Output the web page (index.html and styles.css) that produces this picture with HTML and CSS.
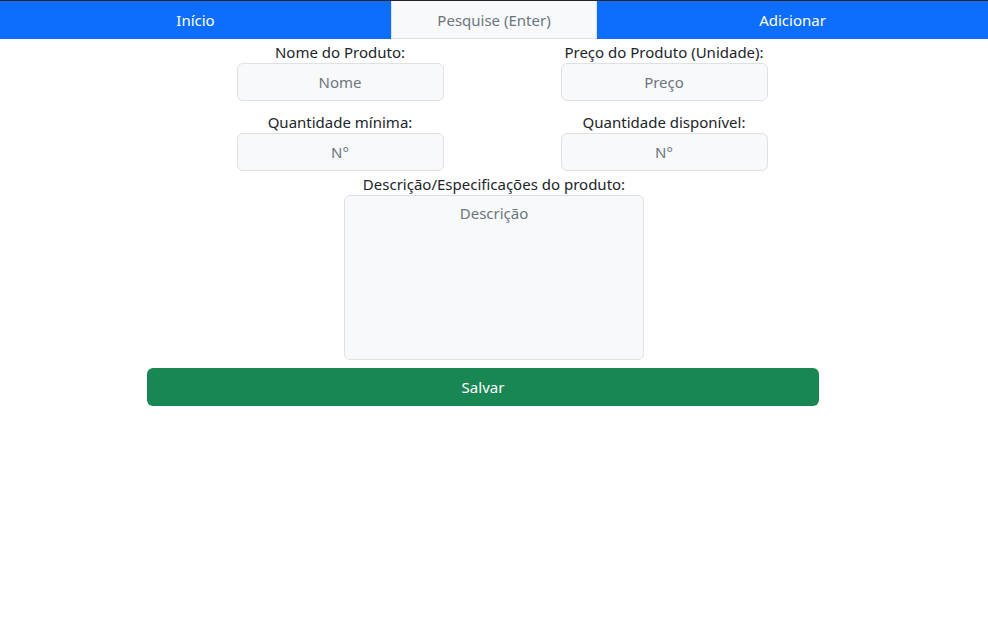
FILE: index.html
```html
<!DOCTYPE html>
<html lang="pt-BR">
<head>
<meta charset="utf-8">
<title>Adicionar Produto</title>
<link rel="stylesheet" href="styles.css">
</head>
<body>
<nav class="navbar">
  <a class="nav-link" href="#">Início</a>
  <input class="nav-search" type="text" placeholder="Pesquise (Enter)">
  <a class="nav-link" href="#">Adicionar</a>
</nav>
<form class="form">
  <div class="grid">
    <div class="field">
      <label class="label">Nome do Produto:</label>
      <input class="control" type="text" placeholder="Nome">
    </div>
    <div class="field">
      <label class="label">Preço do Produto (Unidade):</label>
      <input class="control" type="text" placeholder="Preço">
    </div>
    <div class="field">
      <label class="label">Quantidade mínima:</label>
      <input class="control" type="text" placeholder="N°">
    </div>
    <div class="field">
      <label class="label">Quantidade disponível:</label>
      <input class="control" type="text" placeholder="N°">
    </div>
  </div>
  <div class="desc">
    <label class="label">Descrição/Especificações do produto:</label>
    <textarea class="control textarea" placeholder="Descrição"></textarea>
  </div>
  <button class="save" type="button">Salvar</button>
</form>
</body>
</html>
```
FILE: styles.css
```css
* { box-sizing: border-box; }
html, body { margin: 0; padding: 0; background: #fff; }
body {
  font-family: "Noto Sans", "Open Sans", sans-serif;
  font-size: 15px;
  color: #212529;
  line-height: 1.5;
  border-top: 1px solid #212529;
}
.navbar {
  display: grid;
  grid-template-columns: 391px 206px 1fr;
  height: 38px;
  background: #0d6efd;
}
.nav-link {
  display: flex;
  align-items: center;
  justify-content: center;
  color: #fff;
  text-decoration: none;
  font-size: 15px;
}
.nav-search {
  height: 38px;
  border: 1px solid #dee2e6;
  border-top: none;
  background: #f8f9fa;
  font: inherit;
  text-align: center;
  color: #6c757d;
  padding: 0 8px;
}
.nav-search::placeholder { color: #6c757d; }
.form {
  display: flex;
  flex-direction: column;
  padding-top: 3px;
}
.grid {
  display: grid;
  grid-template-columns: 324px 324px;
  row-gap: 11px;
  margin-left: 178px;
}
.field, .desc {
  display: flex;
  flex-direction: column;
  align-items: center;
}
.label { line-height: 21px; height: 21px; }
.control {
  width: 207px;
  height: 38px;
  border: 1px solid #dee2e6;
  border-radius: 6px;
  background: #f8f9fa;
  font: inherit;
  text-align: center;
  color: #212529;
  padding: 6px 12px;
}
.control::placeholder { color: #6c757d; }
.desc { margin-top: 3px; }
.textarea {
  width: 300px;
  height: 165px;
  resize: none;
  display: block;
  padding-top: 6px;
}
.save {
  margin: 8px 0 0 147px;
  width: 672px;
  height: 38px;
  background: #198754;
  color: #fff;
  border: none;
  border-radius: 6px;
  font: inherit;
}
```
